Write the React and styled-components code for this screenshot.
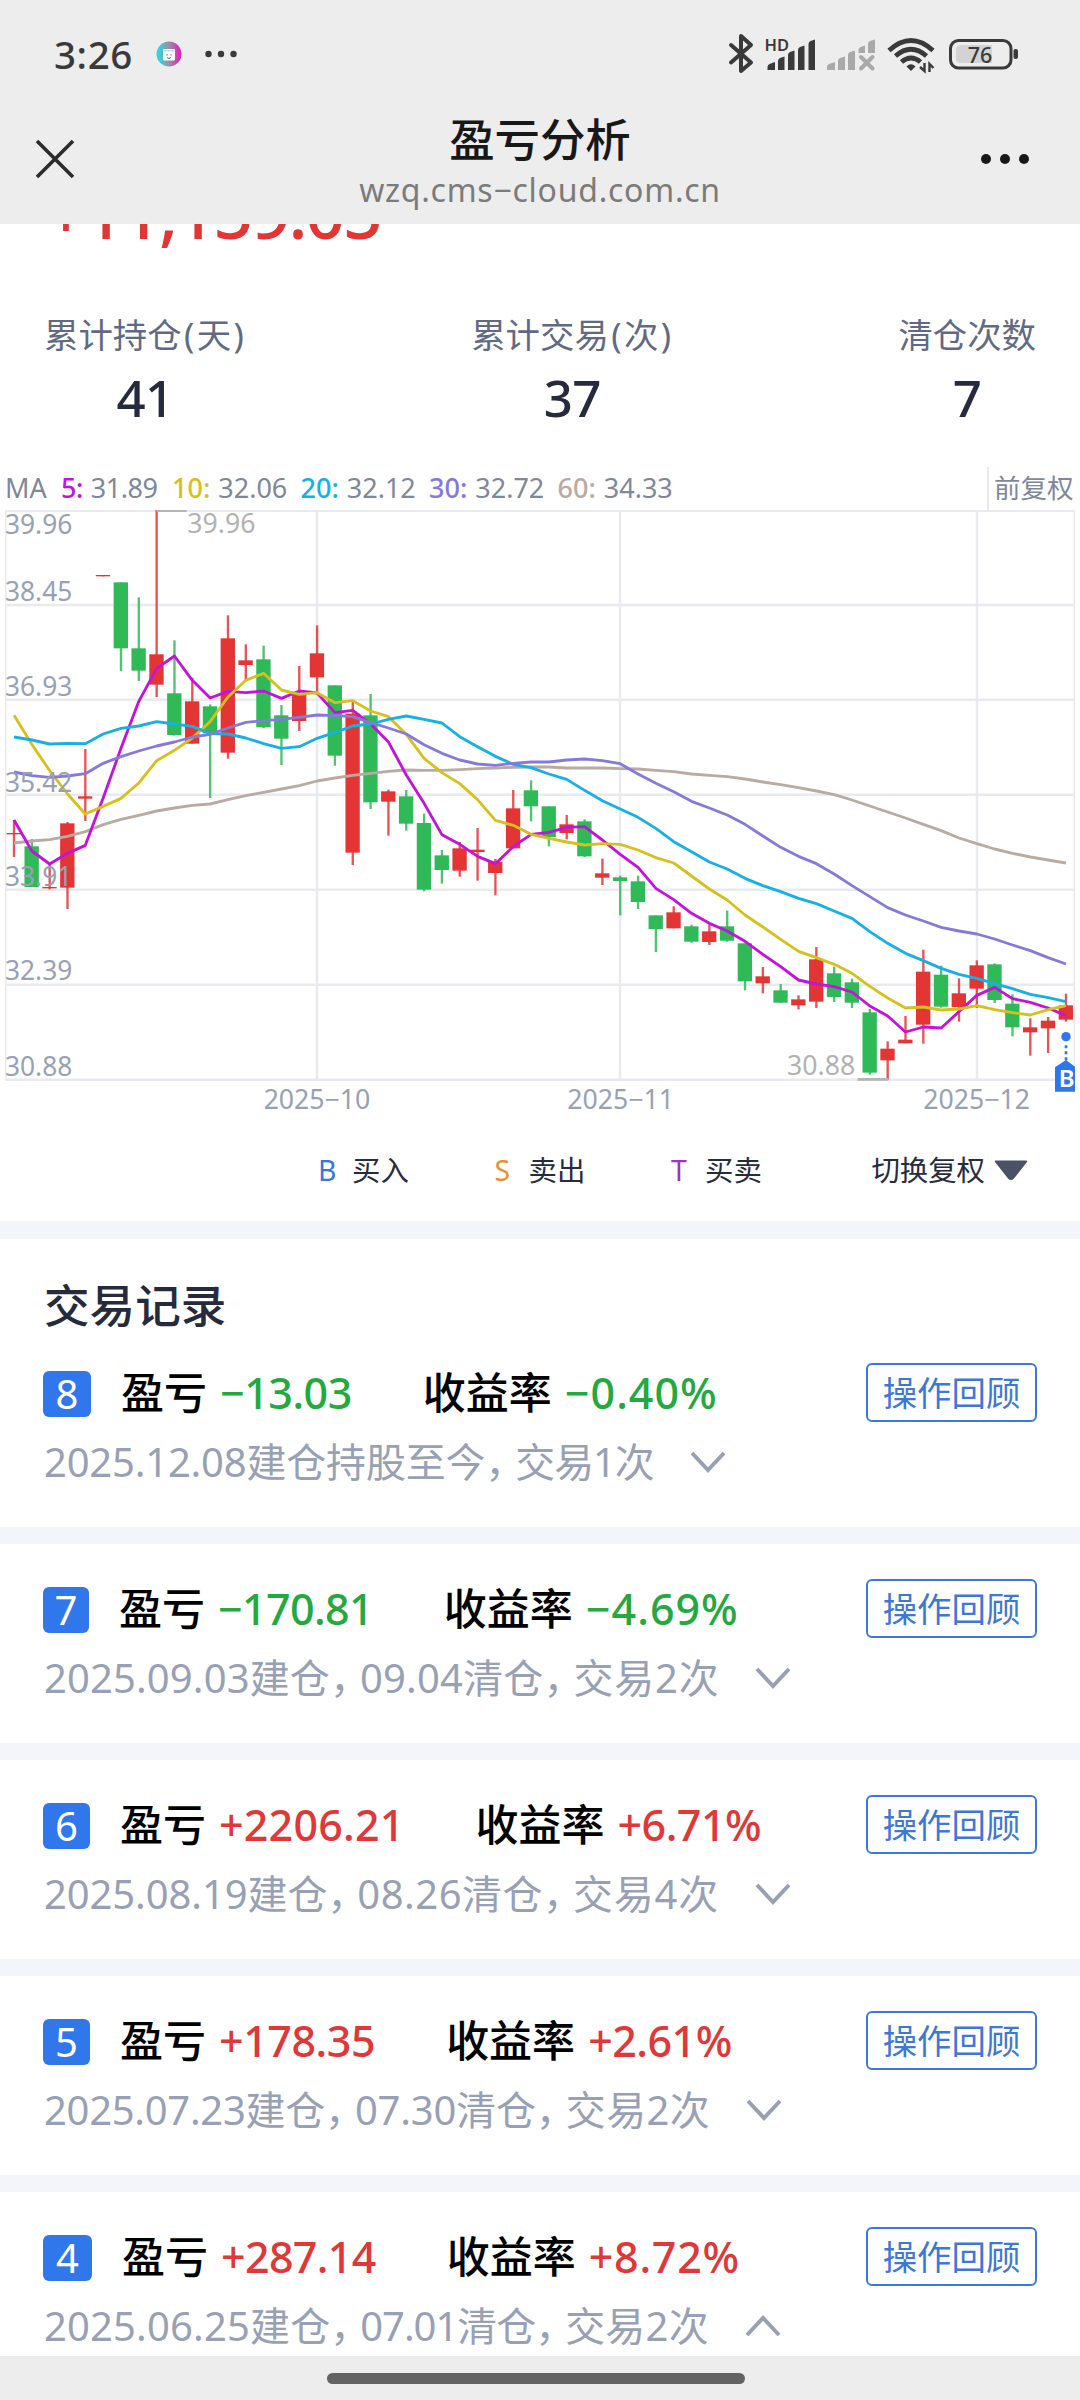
import React from "react";
import styled, { createGlobalStyle } from "styled-components";

// All chart values are in thirds of a css pixel
const candles = [
  ["r", 999, 1003, 960, 1071],
  ["g", 1039, 1161, 1017, 1161],
  ["r", 1161, 1165, 1090, 1168],
  ["r", 970, 1163, 966, 1227],
  ["r", 889, 896, 747, 963],
  ["r", 225, 229, 225, 229],
  ["g", 247, 445, 247, 513],
  ["g", 445, 512, 292, 543],
  ["r", 463, 554, 30, 591],
  ["g", 580, 705, 421, 707],
  ["r", 604, 731, 533, 731],
  ["g", 619, 700, 613, 894],
  ["r", 415, 758, 346, 776],
  ["r", 481, 495, 433, 540],
  ["g", 478, 682, 437, 684],
  ["g", 646, 716, 615, 795],
  ["r", 580, 663, 498, 693],
  ["r", 460, 532, 376, 575],
  ["g", 556, 767, 556, 797],
  ["r", 641, 1058, 605, 1095],
  ["g", 646, 907, 582, 927],
  ["r", 874, 905, 869, 1007],
  ["g", 889, 971, 870, 992],
  ["g", 969, 1169, 941, 1174],
  ["g", 1066, 1110, 1050, 1151],
  ["r", 1045, 1112, 1026, 1130],
  ["r", 1049, 1056, 984, 1142],
  ["r", 1085, 1119, 1077, 1186],
  ["r", 925, 1045, 870, 1045],
  ["g", 871, 919, 841, 964],
  ["g", 919, 1011, 919, 1039],
  ["r", 973, 999, 945, 1018],
  ["g", 964, 1069, 958, 1071],
  ["r", 1120, 1133, 1076, 1155],
  ["g", 1132, 1143, 1127, 1246],
  ["g", 1144, 1206, 1127, 1227],
  ["g", 1246, 1287, 1246, 1356],
  ["r", 1237, 1285, 1219, 1285],
  ["g", 1279, 1325, 1274, 1328],
  ["r", 1294, 1326, 1273, 1335],
  ["g", 1279, 1322, 1232, 1325],
  ["g", 1330, 1444, 1330, 1471],
  ["r", 1429, 1450, 1401, 1480],
  ["g", 1471, 1508, 1452, 1508],
  ["r", 1498, 1516, 1486, 1528],
  ["r", 1378, 1505, 1341, 1524],
  ["g", 1420, 1491, 1400, 1506],
  ["g", 1447, 1508, 1436, 1524],
  ["g", 1537, 1718, 1527, 1724],
  ["r", 1646, 1681, 1624, 1739],
  ["r", 1619, 1630, 1548, 1630],
  ["r", 1415, 1574, 1349, 1631],
  ["g", 1424, 1520, 1397, 1523],
  ["r", 1480, 1521, 1435, 1565],
  ["r", 1396, 1466, 1381, 1524],
  ["g", 1393, 1500, 1390, 1509],
  ["g", 1511, 1582, 1483, 1609],
  ["r", 1582, 1597, 1555, 1667],
  ["r", 1562, 1585, 1551, 1659],
  ["r", 1516, 1559, 1481, 1565],
];

const averages = [
  {
    days: 60,
    value: "34.33",
    color: "#b9aaa2",
    points: [
      1029, 1023, 1019, 1009, 995, 974, 958, 946, 933, 924, 916, 912, 899, 887,
      877, 867, 857, 843, 834, 826, 820, 814, 810, 811, 811, 809, 806, 804, 802,
      801, 801, 804, 804, 804, 806, 807, 811, 815, 822, 826, 830, 837, 846, 854,
      863, 873, 884, 900, 918, 936, 954, 973, 992, 1014, 1031, 1047, 1060, 1071,
      1080, 1089,
    ],
  },
  {
    days: 5,
    value: "31.89",
    color: "#c412dc",
    points: [
      960, 1053, 1092, 1060, 1036, 894, 745, 604, 505, 468, 541, 594, 574, 578,
      573, 595, 573, 579, 638, 631, 672, 726, 825, 910, 1004, 1033, 1069, 1091,
      1040, 1003, 997, 982, 980, 1020, 1063, 1102, 1165, 1199, 1240, 1270, 1293,
      1324, 1363, 1400, 1440, 1452, 1460, 1476, 1518, 1548, 1596, 1581, 1584,
      1535, 1486, 1462, 1496, 1507, 1524, 1547,
    ],
  },
  {
    days: 10,
    value: "32.06",
    color: "#d6c01e",
    points: [
      646, 733, 812, 882, 942, 919, 895, 849, 782, 751, 714, 665, 591, 541, 520,
      570, 583, 578, 608, 602, 633, 650, 703, 775, 818, 851, 899, 961, 976,
      1003, 1015, 1026, 1035, 1031, 1033, 1050, 1073, 1089, 1128, 1167, 1200,
      1245, 1281, 1318, 1354, 1373, 1393, 1420, 1459, 1494, 1524, 1521, 1530,
      1527, 1517, 1529, 1538, 1545, 1529, 1517,
    ],
  },
  {
    days: 20,
    value: "32.12",
    color: "#16b0e6",
    points: [
      711, 720, 732, 730, 731, 702, 685, 678, 665, 672, 679, 701, 702, 714, 731,
      745, 740, 715, 697, 678, 672, 658, 648, 658, 669, 710, 740, 769, 793, 803,
      822, 838, 871, 902, 927, 952, 985, 1025, 1055, 1086, 1107, 1135, 1157,
      1175, 1195, 1211, 1233, 1255, 1295, 1330, 1360, 1382, 1405, 1423, 1435,
      1451, 1466, 1483, 1493, 1505,
    ],
  },
  {
    days: 30,
    value: "32.72",
    color: "#8579dc",
    points: [
      816, 827, 832, 828, 821, 790, 770, 753, 738, 726, 711, 703, 684, 667, 662,
      658, 652, 645, 647, 650, 668, 684, 702, 734, 760, 780, 792, 796, 790, 786,
      786, 780, 777, 782, 791, 822, 850, 875, 904, 924, 945, 973, 1008, 1042,
      1069, 1091, 1122, 1157, 1190, 1223, 1245, 1263, 1282, 1293, 1302, 1317,
      1335, 1352, 1373, 1392,
    ],
  },
];

const priceLabels = [
  ["39.96", 101],
  ["38.45", 304],
  ["36.93", 588],
  ["35.42", 875],
  ["33.91", 1157],
  ["32.39", 1441],
  ["30.88", 1727],
];

const months = [
  ["2025−10", 951],
  ["2025−11", 1862],
  ["2025−12", 2930],
];

const gridRows = [32, 315, 599, 884, 1169, 1454, 1739];

const stats = [
  { label: "累计持仓", unit: "天", value: "41" },
  { label: "累计交易", unit: "次", value: "37" },
  { label: "清仓次数", value: "7" },
];

// The number beside each text is its letter spacing
const records = [
  {
    id: 8,
    width: 48,
    profit: ["−13.03", -0.5],
    rate: ["−0.40%", 1],
    meta: [
      ["2025.12.08建仓持股至今", -0.2],
      ["交易1次", -1.1],
    ],
  },
  {
    id: 7,
    width: 46,
    profit: ["−170.81", -0.65],
    rate: ["−4.69%", 1],
    meta: [
      ["2025.09.03建仓", 0.12],
      ["09.04清仓", 0.2],
      ["交易2次", 0.75],
    ],
  },
  {
    id: 6,
    width: 47,
    profit: ["+2206.21", 0.2],
    rate: ["+6.71%", -0.5],
    meta: [
      ["2025.08.19建仓", -0.1],
      ["08.26清仓", 0.5],
      ["交易4次", 0.75],
    ],
  },
  {
    id: 5,
    width: 47,
    profit: ["+178.35", -0.45],
    rate: ["+2.61%", -0.5],
    meta: [
      ["2025.07.23建仓", -0.3],
      ["07.30清仓", -0.2],
      ["交易2次", 0.4],
    ],
  },
  {
    id: 4,
    width: 49,
    profit: ["+287.14", -0.65],
    rate: ["+8.72%", 0.75],
    meta: [
      ["2025.06.25建仓", 0.15],
      ["07.01清仓", -1.05],
      ["交易2次", 0.2],
    ],
    open: true,
  },
];

const candleX = (i) => 42 + i * 53.49;

const StatusIcons = () => (
  <svg width="300" height="48" viewBox="724 30 300 48">
    <path
      d="M731 45 L751 62.5 L741 71 V36 L751 45 L731 62.5"
      fill="none"
      stroke="#3a3a3a"
      strokeWidth="4"
      strokeLinejoin="round"
      strokeLinecap="round"
    />
    <HdText x="764.5" y="50.5">
      HD
    </HdText>
    <g fill="#3a3a3a">
      <path d="M767.5 70V67q0-2 2-3l5.5-2V70z" />
      <path d="M778 70V61q0-2 2-3l4.500-1.500V70z" />
      <path d="M788 70V55q0-2 2-3l4.500-1.500V70z" />
      <path d="M798 70V50q0-2 2-3l4.500-1.500V70z" />
      <path d="M808.500 70V44q0-2 2-3l4.500-1.500V70z" />
    </g>
    <g fill="#a9a9a9">
      <path d="M827 70V67q0-2 2-3l6-2V70z" />
      <path d="M838 70V61q0-2 2-3l5-1.500V70z" />
      <path d="M848 70V55q0-2 2-3l5-1.500V70z" />
      <path d="M858.500 53V50q0-2 2-3l4.500-1.500V53z" />
      <path d="M868 53V44q0-2 2-3l5-1.500V53z" />
    </g>
    <path
      d="M861 57 L872.500 68.500 M872.500 57 L861 68.500"
      stroke="#a9a9a9"
      strokeWidth="4"
      strokeLinecap="round"
    />
    <g fill="none" stroke="#3a3a3a" strokeWidth="4.800">
      <path d="M889 50.500 Q911 30.500 933 50.500" />
      <path d="M895.500 56 Q911 42.500 926.500 56" />
      <path d="M901.500 62 Q911 54 920.500 62" />
    </g>
    <path d="M906.500 66.500 Q911 62 915.500 66.500 L911 71z" fill="#3a3a3a" />
    <path
      d="M924.500 63 V71 L920 67 M929.500 72 V64 L933.500 68"
      fill="none"
      stroke="#3a3a3a"
      strokeWidth="2.400"
    />
    <rect
      x="950.500"
      y="40.500"
      width="60.500"
      height="27.500"
      rx="8"
      fill="none"
      stroke="#3a3a3a"
      strokeWidth="3"
    />
    <path d="M992 45 H961 Q956 45 956 50 V58 Q956 63 961 63 H992z" fill="#d3d3d3" />
    <rect x="1013.500" y="49" width="4.500" height="10" rx="2" fill="#3a3a3a" />
    <BatteryText x="980" y="62.500">
      76
    </BatteryText>
  </svg>
);

const AppIcon = () => (
  <svg width="26" height="26" viewBox="0 0 26 26">
    <defs>
      <linearGradient id="ring" x1="0" x2="1">
        <stop offset="0.1" stopColor="#35d3dc" />
        <stop offset="0.5" stopColor="#9a8fa5" />
        <stop offset="0.9" stopColor="#d42fb4" />
      </linearGradient>
    </defs>
    <circle cx="13" cy="13" r="12.500" fill="url(#ring)" />
    <rect x="7" y="8" width="12" height="11.500" rx="1" fill="#fff" />
    <path d="M7.500 9.800 H18.500" stroke="#a9d5e8" strokeWidth="1.200" />
    <path
      d="M11 13 V14.500 M15 13 V14.500 M11 16.500 Q13 18.500 15 16.500"
      fill="none"
      stroke="#555"
      strokeWidth="0.900"
    />
  </svg>
);

const KLine = () => (
  <ChartSvg viewBox="0 30 3240 1830">
    <g stroke="#e9eaf0" strokeWidth="7.5">
      {gridRows.map((y) => (
        <path key={y} d={`M15 ${y} H3224`} />
      ))}
      {[951, 1860, 2931].map((x) => (
        <path key={x} d={`M${x} 32 V1739`} />
      ))}
      <path d="M17 32 V1739 M3223 32 V1739" strokeWidth="5" />
    </g>
    {candles.map(([type, top, bottom, high, low], i) => {
      const x = candleX(i);
      const color = type === "r" ? "#e43535" : "#2fb957";
      return (
        <g key={i} fill={color}>
          <rect x={x - 3.5} y={high} width="7" height={low - high} opacity="0.85" />
          <rect x={x - 22} y={top} width="43" height={bottom - top} />
        </g>
      );
    })}
    {averages.map((line) => (
      <polyline
        key={line.days}
        points={line.points.map((y, i) => `${candleX(i)},${y}`).join(" ")}
        fill="none"
        stroke={line.color}
        strokeWidth="8.5"
        strokeLinejoin="round"
      />
    ))}
    <path d="M470 32 H560 M2573 1738 H2664" stroke="#b4b4b4" strokeWidth="8" />
    {priceLabels.map(([text, y]) => (
      <AxisText key={text} x="15" y={y}>
        {text}
      </AxisText>
    ))}
    <ExtremeText x="562" y="98">
      39.96
    </ExtremeText>
    <ExtremeText x="2361" y="1725">
      30.88
    </ExtremeText>
    {months.map(([text, x]) => (
      <MonthText key={text} x={x} y="1826">
        {text}
      </MonthText>
    ))}
    <circle cx="3198" cy="1610" r="14" fill="#2f76ea" />
    <path
      d="M3198 1636 V1685"
      stroke="#2f76ea"
      strokeWidth="8"
      strokeDasharray="9 9"
    />
    <path d="M3198 1680 L3225 1700 V1775 H3165 V1702z" fill="#2f76ea" />
    <MarkText x="3200" y="1761">
      B
    </MarkText>
  </ChartSvg>
);

const Record = ({ record }) => {
  const [profit, profitSpacing] = record.profit;
  const [rate, rateSpacing] = record.rate;

  return (
    <RecordItem>
      <RecordHead>
        <Badge $width={record.width}>{record.id}</Badge>
        <Label>盈亏</Label>
        <Value $up={profit[0] === "+"} $spacing={profitSpacing}>
          {profit}
        </Value>
        <Label $second>收益率</Label>
        <Value $up={rate[0] === "+"} $spacing={rateSpacing}>
          {rate}
        </Value>
        <ReviewButton>操作回顾</ReviewButton>
      </RecordHead>
      <Meta>
        {record.meta.map(([part, spacing], i) => (
          <React.Fragment key={part}>
            {i > 0 && <Comma>，</Comma>}
            <MetaPart $spacing={spacing}>{part}</MetaPart>
          </React.Fragment>
        ))}
        <Chevron viewBox="0 0 36 22" $open={record.open}>
          <path d="M2 2 L18 19 L34 2" />
        </Chevron>
      </Meta>
    </RecordItem>
  );
};

const App = () => {
  const legend = [...averages.slice(1), averages[0]];

  return (
    <>
      <GlobalStyle />
      <Page>
        <Header>
          <StatusBar>
            <Clock>3:26</Clock>
            <AppIcon />
            <Dots width="32" height="8" viewBox="0 0 32 8">
              <circle cx="3.500" cy="4" r="3.200" />
              <circle cx="16" cy="4" r="3.200" />
              <circle cx="28.500" cy="4" r="3.200" />
            </Dots>
            <StatusIcons />
          </StatusBar>
          <NavBar>
            <svg width="40" height="40" viewBox="0 0 40 40">
              <path d="M2 2 L38 38 M38 2 L2 38" stroke="#2b2b2b" strokeWidth="3.600" />
            </svg>
            <NavTitle>
              <h1>盈亏分析</h1>
              <p>wzq.cms−cloud.com.cn</p>
            </NavTitle>
            <svg width="50" height="12" viewBox="0 0 50 12">
              <circle cx="6" cy="6" r="5" fill="#181818" />
              <circle cx="25" cy="6" r="5" fill="#181818" />
              <circle cx="44" cy="6" r="5" fill="#181818" />
            </svg>
          </NavBar>
        </Header>

        <TotalProfit>
          <span>+11,159.05</span>
        </TotalProfit>

        <Stats>
          {stats.map((stat) => (
            <Stat key={stat.label}>
              <StatLabel>
                {stat.label}
                {stat.unit && (
                  <>
                    <Paren>(</Paren>
                    {stat.unit}
                    <Paren>)</Paren>
                  </>
                )}
              </StatLabel>
              <StatValue>{stat.value}</StatValue>
            </Stat>
          ))}
        </Stats>

        <MaBar>
          <MaName>MA</MaName>
          {legend.map((ma) => (
            <MaItem key={ma.days} $color={ma.color} $short={ma.days < 10}>
              <b>{ma.days}:</b> {ma.value}
            </MaItem>
          ))}
          <Adjust>前复权</Adjust>
        </MaBar>
        <KLine />

        <TradeLegend>
          <Mark $color="#3a76d4">
            <b>B</b>买入
          </Mark>
          <Mark $color="#e8912f">
            <b>S</b>卖出
          </Mark>
          <Mark $color="#a52fc8">
            <b>T</b>买卖
          </Mark>
          <Switch>
            切换复权
            <svg width="34" height="21" viewBox="0 0 34 21">
              <path
                d="M2 0.500 H32 Q34 0.500 33 2 L20 18.500 Q17 21.500 14 18.500 L1 2 Q0 0.500 2 0.500z"
                fill="#4a5266"
              />
            </svg>
          </Switch>
        </TradeLegend>

        <SectionTitle>交易记录</SectionTitle>
        <RecordList>
          {records.map((record) => (
            <Record key={record.id} record={record} />
          ))}
        </RecordList>

        <HomeBar>
          <Pill />
        </HomeBar>
      </Page>
    </>
  );
};

// Styled components
const GlobalStyle = createGlobalStyle`
  * {
    margin: 0;
    padding: 0;
    box-sizing: border-box;
  }

  body {
    background: #fff;
    font-family: "Noto Sans", "Noto Sans CJK SC", sans-serif;
  }

  svg {
    display: block;
    flex-shrink: 0;
  }
`;

const Page = styled.div`
  width: 1080px;
  height: 2400px;
  display: flex;
  flex-direction: column;
  overflow: hidden;
  background: #fff;
`;

const Header = styled.header`
  height: 224px;
  flex-shrink: 0;
  background: #ededed;
`;

const StatusBar = styled.div`
  height: 108px;
  display: flex;
  align-items: center;
  padding: 0 56px 0 54px;

  svg:last-child {
    margin-left: auto;
  }
`;

const Clock = styled.span`
  width: 102px;
  font-size: 38.5px;
  font-weight: 500;
  line-height: 44px;
  letter-spacing: 0.6px;
  color: #3a3a3a;
`;

const Dots = styled.svg`
  margin-left: 23px;
  fill: #3a3a3a;
`;

const HdText = styled.text`
  font-size: 16.5px;
  font-weight: 600;
  fill: #3a3a3a;
`;

const BatteryText = styled.text`
  font-size: 21.5px;
  font-weight: 500;
  text-anchor: middle;
  fill: #3a3a3a;
`;

const NavBar = styled.div`
  height: 102px;
  display: flex;
  align-items: center;
  justify-content: space-between;
  padding: 0 50px 0 35px;
`;

const NavTitle = styled.div`
  margin: 8px 0 0 25px;
  text-align: center;

  h1 {
    font-size: 45.4px;
    font-weight: 500;
    line-height: 54px;
    color: #181818;
  }

  p {
    font-size: 32px;
    line-height: 48px;
    letter-spacing: 0.75px;
    color: #7b7b7b;
  }
`;

const TotalProfit = styled.div`
  height: 86px;
  flex-shrink: 0;
  display: flex;
  align-items: flex-start;
  padding-left: 46px;
  overflow: hidden;

  span {
    margin-top: -62px;
    font-size: 70px;
    font-weight: 500;
    line-height: 100px;
    letter-spacing: -2.4px;
    color: #e43535;
  }
`;

const Stats = styled.div`
  height: 157px;
  flex-shrink: 0;
  display: flex;
  justify-content: space-between;
  padding: 0 44px;
`;

const Stat = styled.div`
  display: flex;
  flex-direction: column;
  align-items: center;
`;

const StatLabel = styled.span`
  font-size: 34.4px;
  line-height: 50px;
  color: #616a82;
`;

const Paren = styled.span`
  padding: 0 2.4px;
`;

const StatValue = styled.strong`
  margin-top: 4px;
  font-size: 51px;
  font-weight: 500;
  line-height: 66px;
  letter-spacing: -0.5px;
  color: #252b3d;
`;

const MaBar = styled.div`
  height: 43px;
  flex-shrink: 0;
  display: flex;
  align-items: stretch;
  padding-left: 5px;
  font-size: 27px;
  line-height: 42px;
  color: #7f879a;
`;

const MaName = styled.span`
  width: 56px;
`;

const MaItem = styled.span`
  width: ${(props) => (props.$short ? "111px" : "128.5px")};
  white-space: nowrap;
  letter-spacing: ${(props) => (props.$short ? "-0.4px" : "0")};

  b {
    margin-right: 1px;
    font-weight: 500;
    color: ${(props) => props.$color};
  }
`;

const Adjust = styled.div`
  width: 93px;
  margin-left: auto;
  padding-left: 5px;
  border-left: 2px solid #e9eaf0;
  font-size: 26.5px;
`;

const ChartSvg = styled.svg`
  width: 1080px;
  height: 610px;
`;

const AxisText = styled.text`
  font-size: 79px;
  fill: #98a1b4;
`;

const ExtremeText = styled.text`
  font-size: 80px;
  fill: #b2b2b2;
`;

const MonthText = styled.text`
  font-size: 80px;
  text-anchor: middle;
  fill: #98a1b4;
`;

const MarkText = styled.text`
  font-size: 72px;
  font-weight: 600;
  text-anchor: middle;
  fill: #fff;
`;

const TradeLegend = styled.div`
  height: 119px;
  flex-shrink: 0;
  display: flex;
  align-items: flex-start;
  padding: 30px 52px 0 318px;
  border-bottom: 18px solid #f4f5fa;
  font-size: 28.4px;
  line-height: 40px;
  color: #262b3d;
`;

const Mark = styled.div`
  width: 176.5px;
  display: flex;

  b {
    width: 34px;
    font-weight: 400;
    color: ${(props) => props.$color};
  }
`;

const Switch = styled.div`
  margin-left: auto;
  display: flex;
  align-items: center;
  gap: 9px;
`;

const SectionTitle = styled.h2`
  height: 89px;
  flex-shrink: 0;
  padding: 41px 0 0 44px;
  font-size: 45.6px;
  font-weight: 500;
  line-height: 50px;
  color: #252b3d;
`;

const RecordList = styled.div`
  flex: 1;
  min-height: 0;
  overflow: hidden;
`;

const RecordItem = styled.div`
  height: 216px;
  padding: 35px 43px 0;
  border-bottom: 17px solid #f4f5fa;
`;

const RecordHead = styled.div`
  height: 59px;
  display: flex;
  align-items: center;
  font-size: 43px;
  line-height: 59px;
`;

const Badge = styled.span`
  width: ${(props) => props.$width}px;
  margin: 2px 30px 0 0;
  border-radius: 6px;
  background: #3177ec;
  font-size: 40px;
  line-height: 46px;
  text-align: center;
  color: #fff;
`;

const Label = styled.span`
  margin-left: ${(props) => (props.$second ? "71px" : "0")};
  margin-right: 13px;
  font-weight: 500;
  color: #000;
`;

const Value = styled.span`
  font-weight: 500;
  letter-spacing: ${(props) => props.$spacing}px;
  color: ${(props) => (props.$up ? "#e03838" : "#24a93f")};
`;

const ReviewButton = styled.button`
  width: 171px;
  height: 59px;
  margin-left: auto;
  border: 2px solid #3c78d4;
  border-radius: 6px;
  background: #fff;
  font-family: inherit;
  font-size: 34.4px;
  line-height: 52px;
  color: #3c78d4;
`;

const Meta = styled.div`
  display: flex;
  align-items: center;
  margin-top: 14px;
  padding-left: 1px;
  font-size: 40px;
  line-height: 52px;
  color: #98a1b4;
`;

const MetaPart = styled.span`
  letter-spacing: ${(props) => props.$spacing}px;
`;

const Comma = styled.span`
  width: 30px;
  font-feature-settings: "halt";
`;

const Chevron = styled.svg`
  width: 36px;
  height: 22px;
  margin-left: 36px;
  fill: none;
  stroke: #98a1b4;
  stroke-width: 4;
  transform: ${(props) => (props.$open ? "rotate(180deg)" : "none")};
`;

const HomeBar = styled.div`
  height: 44px;
  flex-shrink: 0;
  display: flex;
  justify-content: center;
  padding-top: 17px;
  background: #ededed;
`;

const Pill = styled.div`
  width: 418px;
  height: 11px;
  margin-right: 8px;
  border-radius: 6px;
  background: #636363;
`;

export default App;
